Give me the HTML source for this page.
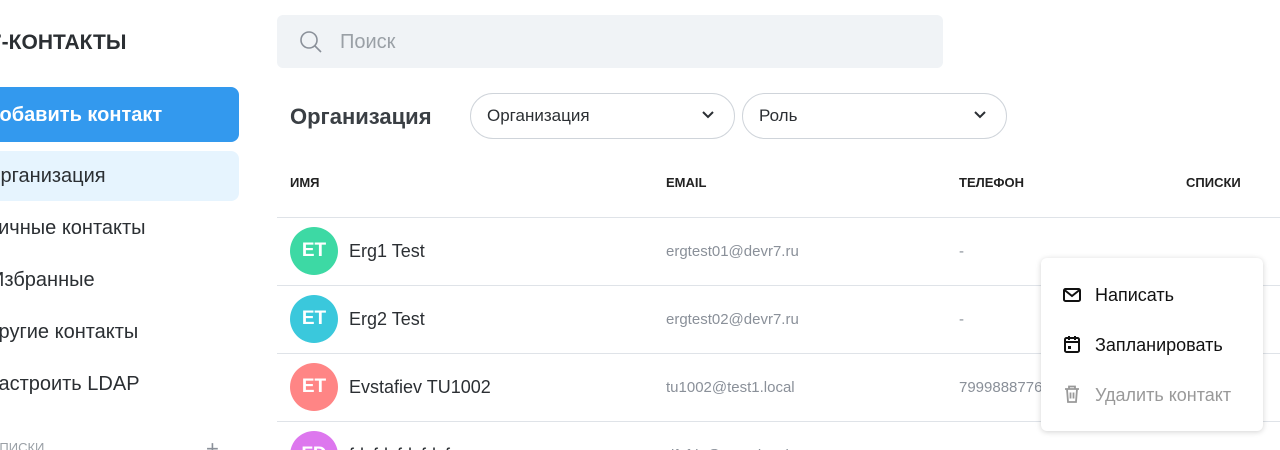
<!DOCTYPE html>
<html><head><meta charset="utf-8"><style>
*{box-sizing:border-box;margin:0;padding:0}
html,body{width:1280px;height:450px;overflow:hidden}
body{background:#fff;font-family:"Liberation Sans","Noto Sans CJK SC",sans-serif;color:#2b2f33;position:relative}
.a{position:absolute;white-space:nowrap}
.nav{font-size:20px;color:#2b2f33}
.hdr{font-size:13px;font-weight:bold;color:#222}
.sep{position:absolute;left:277px;width:1003px;height:1px;background:#dfe3e8}
.av{position:absolute;left:290px;width:48px;height:48px;border-radius:50%;color:#fff;font-weight:bold;font-size:19px;text-align:center;line-height:48px}
.nm{font-size:18px;color:#2b2f33}
.em{font-size:15px;color:#8a9099}
</style></head><body>
<div class="a" style="left:-10px;top:31px;font-size:21px;font-weight:bold;color:#2b2f33">7-КОНТАКТЫ</div>
<div class="a" style="left:-20px;top:87px;width:259px;height:55px;background:#3399ee;border-radius:8px"></div>
<div class="a" style="left:-15px;top:104px;font-size:20px;font-weight:bold;color:#fff">Добавить контакт</div>
<div class="a" style="left:-20px;top:151px;width:259px;height:50px;background:#e6f4fe;border-radius:8px"></div>
<div class="a nav" style="left:-15px;top:165px">Организация</div>
<div class="a nav" style="left:-15px;top:217px">Личные контакты</div>
<div class="a nav" style="left:-10px;top:269px">Избранные</div>
<div class="a nav" style="left:-15px;top:321px">Другие контакты</div>
<div class="a nav" style="left:-16px;top:373px">Настроить LDAP</div>
<div class="a" style="left:-10px;top:440px;font-size:13px;color:#9aa0a6">СПИСКИ</div>
<div class="a" style="left:206px;top:436px;font-size:22px;color:#8a9099">+</div>

<div class="a" style="left:277px;top:15px;width:666px;height:53px;background:#f0f3f6;border-radius:6px"></div>
<svg class="a" style="left:298px;top:29px" width="26" height="26" viewBox="0 0 26 26" fill="none" stroke="#8a9099" stroke-width="1.6"><circle cx="11" cy="11" r="8"/><path d="M17 17l6 6"/></svg>
<div class="a" style="left:340px;top:31px;font-size:20px;color:#9aa0a6">Поиск</div>

<div class="a" style="left:290px;top:104px;font-size:22px;font-weight:bold;color:#3a3f44">Организация</div>
<div class="a" style="left:470px;top:93px;width:265px;height:46px;border:1px solid #cfd4da;border-radius:23px"></div>
<div class="a" style="left:487px;top:106px;font-size:17px">Организация</div>
<svg class="a" style="left:701px;top:110px" width="14" height="10" viewBox="0 0 14 10" fill="none" stroke="#2b2f33" stroke-width="2"><path d="M2 2l5 5 5-5"/></svg>
<div class="a" style="left:742px;top:93px;width:265px;height:46px;border:1px solid #cfd4da;border-radius:23px"></div>
<div class="a" style="left:759px;top:106px;font-size:17px">Роль</div>
<svg class="a" style="left:973px;top:110px" width="14" height="10" viewBox="0 0 14 10" fill="none" stroke="#2b2f33" stroke-width="2"><path d="M2 2l5 5 5-5"/></svg>

<div class="a hdr" style="left:290px;top:175px">ИМЯ</div>
<div class="a hdr" style="left:666px;top:175px">EMAIL</div>
<div class="a hdr" style="left:959px;top:175px">ТЕЛЕФОН</div>
<div class="a hdr" style="left:1186px;top:175px">СПИСКИ</div>

<div class="sep" style="top:217px"></div>
<div class="sep" style="top:285px"></div>
<div class="sep" style="top:353px"></div>
<div class="sep" style="top:421px"></div>

<div class="av" style="top:227px;background:#3dd9a4">ET</div>
<div class="a nm" style="left:349px;top:241px">Erg1 Test</div>
<div class="a em" style="left:666px;top:243px">ergtest01@devr7.ru</div>
<div class="a em" style="left:959px;top:243px">-</div>
<div class="av" style="top:295px;background:#3ac8dc">ET</div>
<div class="a nm" style="left:349px;top:309px">Erg2 Test</div>
<div class="a em" style="left:666px;top:311px">ergtest02@devr7.ru</div>
<div class="a em" style="left:959px;top:311px">-</div>
<div class="av" style="top:363px;background:#ff8585">ET</div>
<div class="a nm" style="left:349px;top:377px">Evstafiev TU1002</div>
<div class="a em" style="left:666px;top:379px">tu1002@test1.local</div>
<div class="a em" style="left:959px;top:379px">79998887766</div>
<div class="av" style="top:431px;background:#dd77ee">FD</div>
<div class="a nm" style="left:349px;top:445px">fdsfdsfdsfdsf</div>
<div class="a em" style="left:666px;top:447px">dfsfds@test1.local</div>

<div class="a" style="left:1041px;top:258px;width:222px;height:173px;background:#fff;border-radius:6px;box-shadow:0 1px 6px rgba(0,0,0,.18)"></div>
<svg class="a" style="left:1062px;top:286px" width="20" height="18" viewBox="0 0 20 18" fill="none" stroke="#111" stroke-width="2"><rect x="2" y="3" width="16" height="12" rx="1.5"/><path d="M2.5 4l7.5 6 7.5-6"/></svg>
<div class="a" style="left:1095px;top:285px;font-size:18px;color:#111">Написать</div>
<svg class="a" style="left:1063px;top:334px" width="18" height="20" viewBox="0 0 18 20" fill="none" stroke="#111" stroke-width="2"><rect x="2" y="4" width="14" height="14" rx="1.5"/><path d="M2 8h14M6 2v4M12 2v4"/><rect x="5" y="12" width="3" height="3" fill="#111" stroke="none"/></svg>
<div class="a" style="left:1095px;top:335px;font-size:18px;color:#111">Запланировать</div>
<svg class="a" style="left:1063px;top:384px" width="18" height="20" viewBox="0 0 18 20" fill="none" stroke="#999" stroke-width="1.8"><path d="M2 5h14M6 5V2.5h6V5M4 5l1 13h8l1-13M7.5 8.5v6M10.5 8.5v6"/></svg>
<div class="a" style="left:1095px;top:385px;font-size:18px;color:#999">Удалить контакт</div>
</body></html>
